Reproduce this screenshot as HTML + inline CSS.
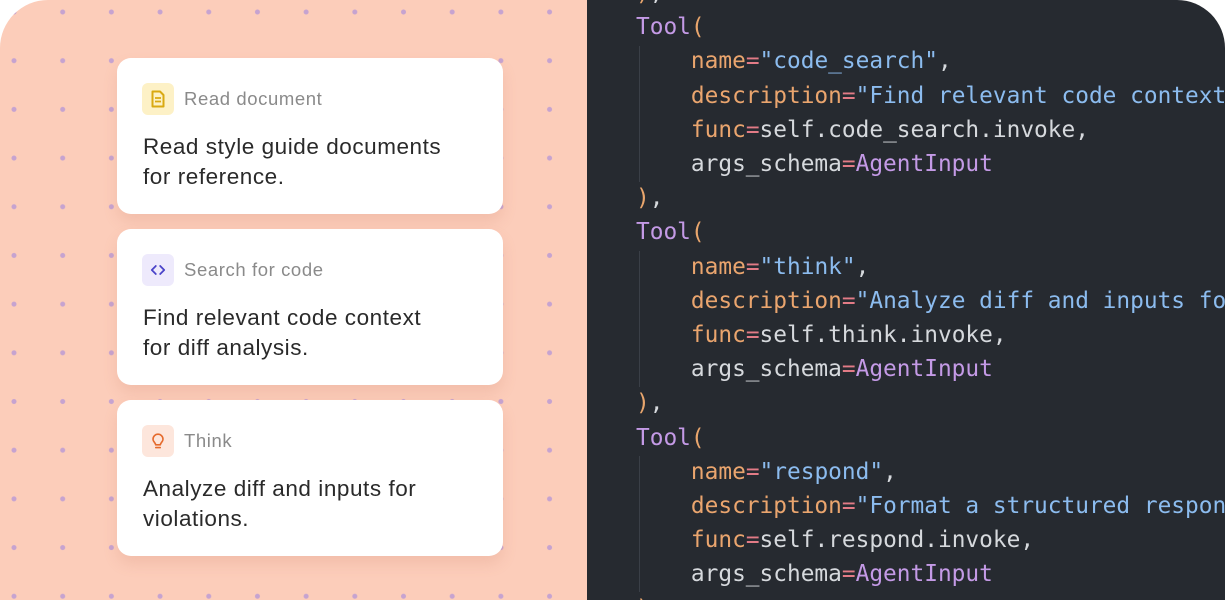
<!DOCTYPE html>
<html><head><meta charset="utf-8"><style>
html,body{margin:0;padding:0;width:1225px;height:600px;overflow:hidden;background:#fff;}
.wrap{position:absolute;left:0;top:0;width:1225px;height:600px;border-radius:48px 48px 0 0;overflow:hidden;}
.left{position:absolute;left:0;top:0;width:587px;height:600px;background-color:#fccdba;
background-image:radial-gradient(circle,#c6a3d0 2.2px,rgba(0,0,0,0) 2.8px);
background-size:48.7px 48.7px;background-position:-10.35px -12.35px;}
.right{position:absolute;left:587px;top:0;width:638px;height:600px;background:#262a30;}
.card{position:absolute;left:117px;width:386px;height:156px;background:#fff;border-radius:14px;box-shadow:0 8px 14px rgba(200,120,100,0.18);font-family:"Liberation Sans",sans-serif;}
.ic{position:absolute;left:25px;top:25px;width:32px;height:32px;border-radius:6px;}
.lbl{position:absolute;left:67px;top:30px;font-size:18.5px;letter-spacing:0.6px;color:#8a8a8a;}
.body{position:absolute;left:26px;top:74px;font-size:22.5px;letter-spacing:0.55px;line-height:30px;color:#2a2a2a;}
pre{position:absolute;left:49px;top:-24px;margin:0;font-family:"DejaVu Sans Mono","Liberation Mono",monospace;font-size:22.8px;line-height:34.2px;color:#d6d9dd;}
.k{color:#c49ae6}.a{color:#eaa56e}.e{color:#e27b86}.s{color:#8cbcef}.p{color:#e9a66d}
.g{position:absolute;left:52px;width:1px;background:#3a3f47;}
</style></head><body>
<div class="wrap">
<div class="left"></div>
<div class="right">
<div class="g" style="top:46px;height:136px"></div>
<div class="g" style="top:251px;height:136px"></div>
<div class="g" style="top:456px;height:136px"></div>
<pre><span class="p">)</span>,
<span class="k">Tool</span><span class="p">(</span>
    <span class="a">name</span><span class="e">=</span><span class="s">"code_search"</span>,
    <span class="a">description</span><span class="e">=</span><span class="s">"Find relevant code context for diff</span>
    <span class="a">func</span><span class="e">=</span>self.code_search.invoke,
    args_schema<span class="e">=</span><span class="k">AgentInput</span>
<span class="p">)</span>,
<span class="k">Tool</span><span class="p">(</span>
    <span class="a">name</span><span class="e">=</span><span class="s">"think"</span>,
    <span class="a">description</span><span class="e">=</span><span class="s">"Analyze diff and inputs for violations</span>
    <span class="a">func</span><span class="e">=</span>self.think.invoke,
    args_schema<span class="e">=</span><span class="k">AgentInput</span>
<span class="p">)</span>,
<span class="k">Tool</span><span class="p">(</span>
    <span class="a">name</span><span class="e">=</span><span class="s">"respond"</span>,
    <span class="a">description</span><span class="e">=</span><span class="s">"Format a structured response</span>
    <span class="a">func</span><span class="e">=</span>self.respond.invoke,
    args_schema<span class="e">=</span><span class="k">AgentInput</span>
<span class="p">)</span>,</pre>
</div>
<div class="card" style="top:58px">
 <div class="ic" style="background:#fdf1c6"><svg width="32" height="32" viewBox="0 0 32 32"><path d="M10.5 8.5h7.5l3.5 3.5v11.5h-11z" fill="none" stroke="#d9a912" stroke-width="2" stroke-linejoin="round"/><path d="M13 15h6M13 18.5h6" stroke="#d9a912" stroke-width="1.8"/></svg></div>
 <div class="lbl">Read document</div>
 <div class="body">Read style guide documents<br>for reference.</div>
</div>
<div class="card" style="top:229px">
 <div class="ic" style="background:#eeeafc"><svg width="32" height="32" viewBox="0 0 32 32"><path d="M13.8 12l-4 4 4 4M18.2 12l4 4-4 4" fill="none" stroke="#4a43c9" stroke-width="1.8" stroke-linecap="round" stroke-linejoin="round"/></svg></div>
 <div class="lbl">Search for code</div>
 <div class="body">Find relevant code context<br>for diff analysis.</div>
</div>
<div class="card" style="top:400px">
 <div class="ic" style="background:#fde6dc"><svg width="32" height="32" viewBox="0 0 32 32"><path d="M13.6 19.8c0-2.2-2.6-2.9-2.6-5.6a5 5 0 0 1 10 0c0 2.7-2.6 3.4-2.6 5.6z" fill="none" stroke="#e56a2c" stroke-width="1.6" stroke-linejoin="round"/><path d="M13.8 22.6h4.4" stroke="#e56a2c" stroke-width="1.6" stroke-linecap="round"/></svg></div>
 <div class="lbl">Think</div>
 <div class="body">Analyze diff and inputs for<br>violations.</div>
</div>
</div>
</body></html>
